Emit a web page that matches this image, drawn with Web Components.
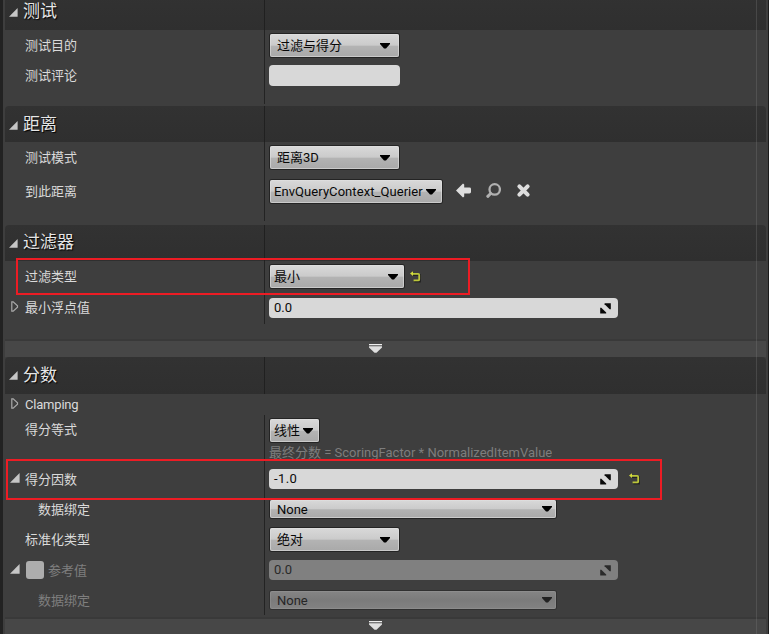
<!DOCTYPE html>
<html lang="zh-CN">
<head>
<meta charset="utf-8">
<title>细节</title>
<style>
html,body{margin:0;height:100%;overflow:hidden;background:#3e3e3e}
body{font:13px/20px Roboto,"Noto Sans CJK SC",sans-serif;color:#dcdcdc}
</style>
</head>
<body>
<details-panel>
  <detail-section label="测试" class="first" style="--body:76px;--sep:74px">
    <detail-row label="测试目的" style="--h:31px"><combo-button style="--w:129px" label="过滤与得分"></combo-button></detail-row>
    <detail-row label="测试评论" style="--h:30px"><value-field plain></value-field></detail-row>
  </detail-section>
  <detail-section label="距离" style="--body:83px;--sep:79px;--drop:0px">
    <detail-row label="测试模式" style="--h:31px"><combo-button style="--w:129px" label="距离3D"></combo-button></detail-row>
    <detail-row label="到此距离" style="--h:37px"><combo-button snug style="--w:172px;letter-spacing:.07px" label="EnvQueryContext_Querier"></combo-button><tool-icons></tool-icons></detail-row>
  </detail-section>
  <detail-section label="过滤器" style="--body:78px;--sep:63px">
    <detail-row label="过滤类型" style="--h:31px"><combo-button snug style="--w:134px" label="最小"></combo-button><reset-icon style="--gap:6px"></reset-icon></detail-row>
    <detail-row label="最小浮点值" expander="closed" style="--h:32px"><value-field value="0.0"></value-field></detail-row>
  </detail-section>
  <advanced-bar></advanced-bar>
  <detail-section label="分数" style="--head:37px;--body:223px;--sep:200px;--from:21px">
    <detail-row label="Clamping" expander="closed" style="--h:21px;letter-spacing:-.2px"></detail-row>
    <detail-row label="得分等式" style="--h:50px;--lh:30px" stacked><combo-button snug style="--w:49px" label="线性"></combo-button><note-text>最终分数 = ScoringFactor * NormalizedItemValue</note-text></detail-row>
    <detail-row label="得分因数" expander="open" low style="--h:28px"><value-field value="-1.0" style="letter-spacing:.4px"></value-field><reset-icon style="--gap:11px"></reset-icon></detail-row>
    <detail-row label="数据绑定" nested low style="--h:32px"><combo-button thin style="--w:286px" label="None"></combo-button></detail-row>
    <detail-row label="标准化类型" style="--h:29px"><combo-button style="--w:129px" label="绝对"></combo-button></detail-row>
    <detail-row label="参考值" expander="open" check off low style="--h:32px"><value-field off value="0.0"></value-field></detail-row>
    <detail-row label="数据绑定" nested off low style="--h:28px"><combo-button thin off style="--w:286px" label="None"></combo-button></detail-row>
  </detail-section>
  <advanced-bar style="--pad:1px"></advanced-bar>
  <mark-box slot="marks" style="left:16px;top:258px;width:454px;height:37px"></mark-box>
  <mark-box slot="marks" style="left:6px;top:459px;width:656px;height:41px"></mark-box>
</details-panel>
<script>
const define = (name, render) => customElements.define(name, class extends HTMLElement {
  constructor() { super(); this.attachShadow({mode: 'open'}); }
  connectedCallback() { this.shadowRoot.innerHTML = render(this); }
});
const attr = (el, n) => el.getAttribute(n) || '';
const openTri = '<svg class="open" width="10" height="10" viewBox="0 0 10 10"><path d="M9.6 0V9.7H0z" fill="#c6c6c6"/></svg>';
const closedTri = '<svg class="closed" width="8" height="11" viewBox="0 0 8 11"><path d="M.8 .9V10.1H2.2L6.5 6.3V4.7L2.2 .9z" fill="none" stroke="#aaa" stroke-width="1.2"/></svg>';

define('details-panel', () => `<style>
:host{display:block;position:relative;height:634px;overflow:hidden;box-sizing:border-box;border-left:3px solid #222;border-right:1px solid #1b1b1b}
.list{padding:0 2px}
.scroll{position:absolute;left:753px;top:0;width:1px;height:634px;background:rgba(120,120,120,.32)}
.marks{position:absolute;left:-3px;top:0}
</style><div class="list"><slot></slot></div><div class="scroll"></div><div class="marks"><slot name="marks"></slot></div>`);

define('detail-section', el => `<style>
:host{display:block}
:host(.first){margin-top:-6px}
header{display:grid;grid-template-columns:259px 1fr;height:var(--head,36px);background:linear-gradient(#323232,#2f2f2f);border-radius:4px 4px 0 0}
.t{display:flex;align-items:center;padding:0 0 var(--drop,2px) 4px;gap:5px;font-size:17px;line-height:24px;color:#e6e6e6;text-shadow:1px 1px 1px #000}
.t svg{width:9px;height:9px;position:relative;top:1px}
.r{border-left:1px solid #202020}
.body{height:var(--body);background:linear-gradient(#232323,#232323) 259px var(--from,0px)/1px var(--sep) no-repeat}
</style><header><div class="t">${openTri}<span>${attr(el,'label')}</span></div><div class="r"></div></header><div class="body"><slot></slot></div>`);

define('detail-row', el => `<style>
:host{display:grid;grid-template-columns:259px 1fr;height:var(--h)}
.l{display:flex;align-items:center;height:var(--lh,var(--h));color:#dadada}
:host([low]) .name{padding-top:2px}
.x{width:20px;flex:none;display:flex;align-items:center;padding-bottom:3px;box-sizing:border-box}
.x .open{margin-left:5px}.x .closed{margin-left:6px}
.v{display:flex;align-items:center;padding-left:5px}
:host([stacked]) .v{flex-direction:column;align-items:flex-start;padding-top:4px;box-sizing:border-box}
:host([nested]) .x{width:33px}
:host([off]) .l{color:#7f7f7f}
.c{width:18px;height:18px;border-radius:3px;background:#adadad;margin:0 4px 0 1px;flex:none}
</style><div class="l"><span class="x">${attr(el,'expander')==='open'?openTri:attr(el,'expander')==='closed'?closedTri:''}</span>${el.hasAttribute('check')?'<span class="c"></span>':''}<span class="name">${attr(el,'label')}</span></div><div class="v"><slot></slot></div>`);

define('combo-button', el => `<style>
:host{display:flex;align-items:center;justify-content:space-between;box-sizing:border-box;flex:none;width:var(--w);height:23px;margin-left:1px;padding:0 9px 0 7px;border-radius:2px;color:#080808;white-space:nowrap;
background:linear-gradient(#d9d9d9,#cbcbcb 48%,#b3b3b3 54%,#a9a9a9);box-shadow:0 0 0 1px #242424,inset 0 0 0 1px rgba(225,225,225,.6)}
:host([snug]){padding:0 6px 0 4px}
:host([thin]){height:18px;padding-right:4px;line-height:18px}
:host([thin]) span{padding-top:2px}
:host([off]){background:linear-gradient(#858585,#7b7b7b 50%,#828282);color:#262626;box-shadow:0 0 0 1px #303030,inset 0 0 0 1px rgba(150,150,150,.5)}
</style><span>${attr(el,'label')}</span><svg width="10" height="6" viewBox="0 0 10 6"><path d="M0 0H10V1L6 5.6H4L0 1z" fill="${el.hasAttribute('off')?'#222':'#000'}"/></svg>`);

define('value-field', el => `<style>
:host{display:flex;align-items:center;justify-content:space-between;box-sizing:border-box;width:349px;height:20px;padding:0 7px 0 5px;border-radius:4px;background:#d8d8d8;color:#0a0a0a}
:host([plain]){width:131px;height:21px;margin-bottom:1px}
:host([off]){background:#808080;color:#2a2a2a}
</style><span>${attr(el,'value')}</span>${el.hasAttribute('plain')?'':`<svg width="11" height="11" viewBox="0 0 11 11" fill="${el.hasAttribute('off')?'#2a2a2a':'#0a0a0a'}"><path d="M4.6 .2H10.8V6.2H9.6L4.6 1.3z"/><path d="M.2 4.7H1.3L6.2 9.4V10.5H.2z"/></svg>`}`);

define('note-text', () => `<style>
:host{display:block;height:17px;overflow:hidden;line-height:22px;color:#7d7d7d;white-space:nowrap}
</style><slot></slot>`);

define('reset-icon', () => `<style>:host{display:block;margin-left:var(--gap);height:12px}svg{display:block}</style>
<svg width="12" height="12" viewBox="0 0 12 12"><path d="M3 4.2H10V10.5H4.4" fill="none" stroke="#222" stroke-width="1.8"/><path d="M2 2.9H8.2Q9.2 2.9 9.2 3.9V8.4Q9.2 9.4 8.2 9.4H3.6" fill="none" stroke="#bcc63a" stroke-width="1.8"/><path d="M0 2.6L3 .2V5z" fill="#d3dc3c"/></svg>`);

define('tool-icons', () => `<style>:host{display:flex;align-items:center;gap:15px;margin-left:14px}svg{display:block;position:relative;top:-1px}</style>
<svg width="15" height="15" viewBox="0 0 15 15"><path d="M0 7.5L7 .6L8.2 1.6V4.6H13.5Q15 4.6 15 6V9Q15 10.4 13.5 10.4H8.2V13.4L7 14.4z" fill="#dedede"/></svg>
<svg width="15" height="15" viewBox="0 0 15 15" fill="none" stroke="#b0b0b0" stroke-linecap="round"><circle cx="8.7" cy="6.4" r="5.2" stroke-width="2.3"/><path d="M4.7 10.5L1.8 13.3" stroke-width="3"/></svg>
<svg width="15" height="15" viewBox="0 0 15 15"><path d="M3.4 3.4L11.6 11.6M11.6 3.4L3.4 11.6" stroke="#dedede" stroke-width="4.1" stroke-linecap="round"/></svg>`);

define('advanced-bar', () => `<style>
:host{display:flex;justify-content:center;box-sizing:border-box;height:18px;border-top:2px solid #393939;background:#474747;padding:var(--pad,2px) 21px 0 0}
svg{display:block}
</style><svg width="14" height="10" viewBox="0 0 14 10"><path d="M1 1H14V2H1z" fill="#eee"/><path d="M1 2H14V3H1z" fill="#777"/><path d="M1 3H14V4.4L8.5 9.8H6.5L1 4.4z" fill="#dedede"/><path d="M1 3H14V4H1z" fill="#b8b8b8"/></svg>`);

define('mark-box', () => `<style>:host{display:block;position:absolute;box-sizing:border-box;border:2px solid #ed1c24}</style>`);
</script>
</body>
</html>
